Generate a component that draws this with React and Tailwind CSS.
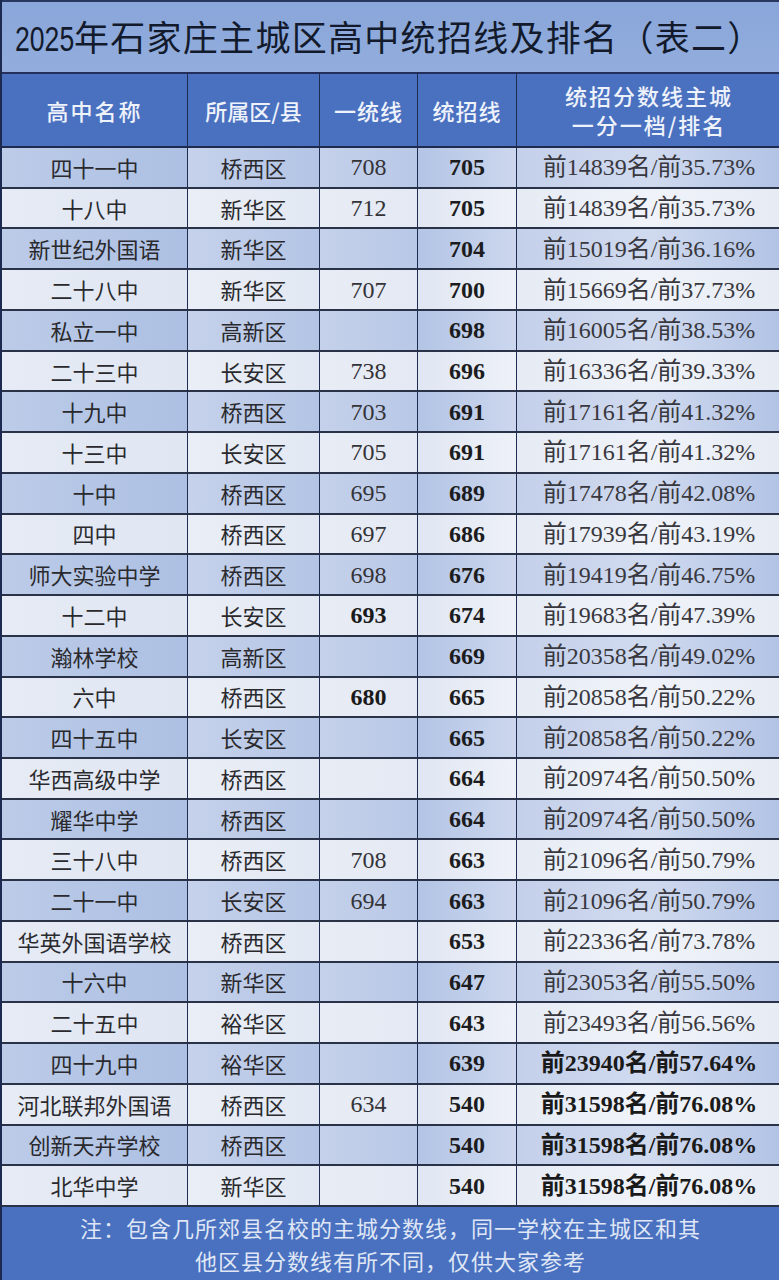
import React from "react";

const rows = [
  ["四十一中", "桥西区", "708", "705", "前14839名/前35.73%"],
  ["十八中", "新华区", "712", "705", "前14839名/前35.73%"],
  ["新世纪外国语", "新华区", "", "704", "前15019名/前36.16%"],
  ["二十八中", "新华区", "707", "700", "前15669名/前37.73%"],
  ["私立一中", "高新区", "", "698", "前16005名/前38.53%"],
  ["二十三中", "长安区", "738", "696", "前16336名/前39.33%"],
  ["十九中", "桥西区", "703", "691", "前17161名/前41.32%"],
  ["十三中", "长安区", "705", "691", "前17161名/前41.32%"],
  ["十中", "桥西区", "695", "689", "前17478名/前42.08%"],
  ["四中", "桥西区", "697", "686", "前17939名/前43.19%"],
  ["师大实验中学", "桥西区", "698", "676", "前19419名/前46.75%"],
  ["十二中", "长安区", "693", "674", "前19683名/前47.39%", true],
  ["瀚林学校", "高新区", "", "669", "前20358名/前49.02%"],
  ["六中", "桥西区", "680", "665", "前20858名/前50.22%", true],
  ["四十五中", "长安区", "", "665", "前20858名/前50.22%"],
  ["华西高级中学", "桥西区", "", "664", "前20974名/前50.50%"],
  ["耀华中学", "桥西区", "", "664", "前20974名/前50.50%"],
  ["三十八中", "桥西区", "708", "663", "前21096名/前50.79%"],
  ["二十一中", "长安区", "694", "663", "前21096名/前50.79%"],
  ["华英外国语学校", "桥西区", "", "653", "前22336名/前73.78%"],
  ["十六中", "新华区", "", "647", "前23053名/前55.50%"],
  ["二十五中", "裕华区", "", "643", "前23493名/前56.56%"],
  ["四十九中", "裕华区", "", "639", "前23940名/前57.64%", false, true],
  ["河北联邦外国语", "桥西区", "634", "540", "前31598名/前76.08%", false, true],
  ["创新天卉学校", "桥西区", "", "540", "前31598名/前76.08%", false, true],
  ["北华中学", "新华区", "", "540", "前31598名/前76.08%", false, true],
];

const cjk = { fontFamily: '"Noto Sans CJK SC", "Noto Sans", sans-serif' };
const num = { fontFamily: '"Liberation Serif", "Noto Sans CJK SC", serif' };

function Row({ r, i }) {
  const blue = i % 2 === 0;
  const [name, dist, a, b, rank, aBold, rankBold] = r;
  const cell = "flex items-center justify-center border-r-[1.5px] border-b-2 border-r-[#1f2c52] border-b-[#2a3248]";
  return (
    <div className="grid grid-cols-[186px_132px_98px_99px_264px]">
      <div
        className={`${cell} text-[22px] text-[#2a2a2e] ${blue ? "bg-gradient-to-r from-[#bccbe8] to-[#adc0e3]" : "bg-gradient-to-r from-[#e6ebf5] to-[#e0e6f2]"}`}
        style={cjk}
      >
        {name}
      </div>
      <div
        className={`${cell} text-[22px] text-[#2a2a2e] ${blue ? "bg-gradient-to-r from-[#c6d2eb] to-[#b3c4e5]" : "bg-gradient-to-r from-[#eaeef6] to-[#e2e8f3]"}`}
        style={cjk}
      >
        {dist}
      </div>
      <div
        className={`${cell} text-[24px] ${aBold ? "font-bold text-[#1a1a1a]" : "text-[#333338]"} ${blue ? "bg-gradient-to-r from-[#c5d1ea] to-[#b8c8e7]" : "bg-gradient-to-r from-[#e8ecf5] to-[#e4e9f3]"}`}
        style={num}
      >
        {a}
      </div>
      <div
        className={`${cell} text-[24px] font-bold text-[#1c1c20] ${blue ? "bg-gradient-to-r from-[#b3c4e5] to-[#ccd7ee]" : "bg-gradient-to-r from-[#e0e6f2] to-[#eef1f8]"}`}
        style={num}
      >
        {b}
      </div>
      <div
        className={`flex items-center justify-center border-b-2 border-b-[#2a3248] text-[24px] ${rankBold ? "font-bold text-[#1a1a1a]" : "text-[#38383e]"} ${blue ? "bg-gradient-to-r from-[#c4d0ea] via-[#d0daef] to-[#b2c3e5]" : "bg-gradient-to-r from-[#e6ebf4] via-[#f0f3f9] to-[#e6ebf4]"}`}
        style={num}
      >
        {rank}
      </div>
    </div>
  );
}

export default function App() {
  return (
    <div className="w-[779px] h-[1280px] flex flex-col bg-[#4a70c0] border-l-2 border-l-[#1c2a52] overflow-hidden">
      <div className="h-[74px] shrink-0 flex items-center pl-[13px] bg-gradient-to-b from-[#8aa6da] to-[#92addd] border-t-2 border-t-[#27375f] border-b-2 border-b-[#24305a]">
        <div className="text-[35px] font-normal tracking-[1.3px] text-[#121a2c] leading-none whitespace-nowrap" style={cjk}>
          <span
            className="inline-block origin-left scale-x-[0.76] mr-[-19px] tracking-normal"
            style={{ fontFamily: '"Liberation Sans", sans-serif' }}
          >
            2025
          </span>
          年石家庄主城区高中统招线及排名（表二）
        </div>
      </div>
      <div
        className="h-[74px] shrink-0 grid grid-cols-[186px_132px_98px_99px_264px] bg-[#4a70c0] border-b-2 border-b-[#1e2a4e] text-[#eef2fa] text-[22px] font-medium"
        style={cjk}
      >
        <div className="flex items-center justify-center border-r-[1.5px] border-r-[#1f2c52] tracking-[2px]">高中名称</div>
        <div className="flex items-center justify-center border-r-[1.5px] border-r-[#1f2c52]">所属区/县</div>
        <div className="flex items-center justify-center border-r-[1.5px] border-r-[#1f2c52] tracking-[1px]">一统线</div>
        <div className="flex items-center justify-center border-r-[1.5px] border-r-[#1f2c52] tracking-[1px]">统招线</div>
        <div className="flex flex-col items-center justify-center leading-[29px] tracking-[2px]">
          <span>统招分数线主城</span>
          <span>一分一档/排名</span>
        </div>
      </div>
      <div className="h-[1059px] shrink-0 grid grid-rows-[repeat(26,1fr)]">
        {rows.map((r, i) => (
          <Row key={i} r={r} i={i} />
        ))}
      </div>
      <div
        className="flex-1 flex flex-col items-center justify-center bg-[#4a70c0] text-[#dfe6f5] text-[22px] leading-[33px] tracking-[1px]"
        style={cjk}
      >
        <span>注：包含几所郊县名校的主城分数线，同一学校在主城区和其</span>
        <span>他区县分数线有所不同，仅供大家参考</span>
      </div>
    </div>
  );
}
